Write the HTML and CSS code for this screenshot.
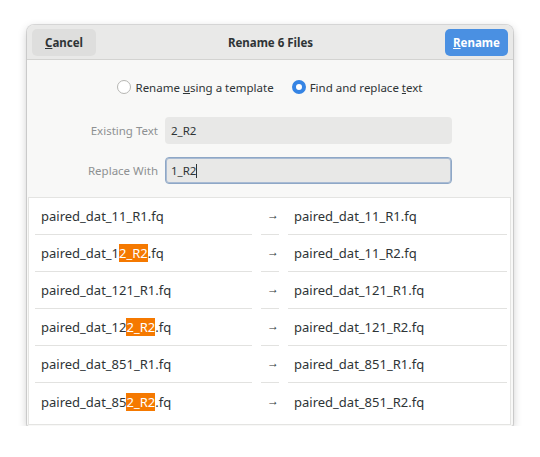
FILE: index.html
```
<!DOCTYPE html>
<html>
<head>
<meta charset="utf-8">
<link rel="stylesheet" href="styles.css">
</head>
<body>
<div class="window">
  <div class="header">
    <button class="btn cancel"><u>C</u>ancel</button>
    <div class="title">Rename 6 Files</div>
    <button class="btn rename"><u>R</u>ename</button>
  </div>
  <div class="content">
    <div class="modes">
      <label class="radio"><span class="dot"></span><span>Rename <u>u</u>sing a template</span></label>
      <label class="radio"><span class="dot on"></span><span>Find and replace <u>t</u>ext</span></label>
    </div>
    <div class="form">
      <span class="lbl">Existing Text</span>
      <div class="entry">2_R2</div>
      <span class="lbl">Replace With</span>
      <div class="entry focus">1_R2<span class="caret"></span></div>
    </div>
    <div class="list">
      <div class="cell">paired_dat_11_R1.fq</div><div class="cell arrow">→</div><div class="cell">paired_dat_11_R1.fq</div>
      <div class="cell">paired_dat_1<span class="hl">2_R2</span>.fq</div><div class="cell arrow">→</div><div class="cell">paired_dat_11_R2.fq</div>
      <div class="cell">paired_dat_121_R1.fq</div><div class="cell arrow">→</div><div class="cell">paired_dat_121_R1.fq</div>
      <div class="cell">paired_dat_12<span class="hl">2_R2</span>.fq</div><div class="cell arrow">→</div><div class="cell">paired_dat_121_R2.fq</div>
      <div class="cell">paired_dat_851_R1.fq</div><div class="cell arrow">→</div><div class="cell">paired_dat_851_R1.fq</div>
      <div class="cell last">paired_dat_85<span class="hl">2_R2</span>.fq</div><div class="cell arrow last">→</div><div class="cell last">paired_dat_851_R2.fq</div>
    </div>
  </div>
</div>
</body>
</html>
```
FILE: styles.css
```
html, body {
  margin: 0;
  padding: 0;
  background: #ffffff;
}
body {
  font-family: "Noto Sans", "Open Sans", sans-serif;
  font-size: 11.5px;
  color: #2e3436;
  padding: 25px 0 0 27px;
}
.window {
  width: 486px;
  height: 401px;
  border-radius: 7px 7px 2px 2px;
  box-shadow: 0 0 0 1px rgba(0,0,0,0.12), 0 3px 10px rgba(0,0,0,0.22);
  background: #f8f8f7;
  overflow: hidden;
  display: flex;
  flex-direction: column;
}
.header {
  height: 35px;
  box-sizing: border-box;
  background: #e9e9e8;
  border-bottom: 1px solid #d3d3d1;
  display: flex;
  align-items: center;
  padding: 0 5px;
}
.btn {
  font-family: inherit;
  font-size: 11.5px;
  font-weight: bold;
  height: 27px;
  border: none;
  border-radius: 5px;
  padding: 0;
}
.cancel {
  width: 64px;
  background: #dededd;
  color: #2e3436;
}
.rename {
  width: 63px;
  background: #4a90e2;
  color: #ffffff;
}
.title {
  flex: 1;
  text-align: center;
  font-weight: bold;
}
.content {
  flex: 1;
  display: flex;
  flex-direction: column;
}
.modes {
  display: flex;
  justify-content: center;
  gap: 18px;
  margin-top: 18px;
  height: 18px;
  align-items: center;
}
.radio {
  display: flex;
  align-items: center;
  gap: 4px;
}
.dot {
  width: 14px;
  height: 14px;
  box-sizing: border-box;
  border-radius: 50%;
  border: 1px solid #b6b6b3;
  background: #ffffff;
}
.dot.on {
  border: 4.5px solid #3584e4;
  background: #ffffff;
}
.form {
  display: grid;
  grid-template-columns: auto 287px;
  column-gap: 7px;
  row-gap: 13px;
  justify-content: center;
  align-items: center;
  margin-top: 21px;
}
.lbl {
  color: #8e9192;
  text-align: right;
}
.entry {
  height: 27px;
  box-sizing: border-box;
  background: #e8e8e7;
  border-radius: 4px;
  padding: 0 5px;
  display: flex;
  align-items: center;
  border: 1px solid transparent;
}
.entry.focus {
  border: 1px solid #8ea7c6;
  box-shadow: inset 0 0 0 1px #a9bbd3;
}
.caret {
  display: inline-block;
  width: 1px;
  height: 14px;
  background: #2e3436;
}
.list {
  margin: 13px 2px 1px 1px;
  flex: 1;
  background: #ffffff;
  border: 1px solid #e4e4e2;
  display: grid;
  grid-template-columns: 217px 18px 219px;
  grid-auto-rows: 37px;
  column-gap: 9px;
  padding: 0 4px 0 6px;
  align-content: start;
  font-size: 13px;
}
.cell {
  display: flex;
  align-items: center;
  padding-left: 6px;
  border-bottom: 1px solid #e2e2e0;
  white-space: nowrap;
}
.cell.last {
  border-bottom: none;
}
.arrow {
  padding-left: 6px;
  font-size: 12px;
  padding-bottom: 3px;
  box-sizing: border-box;
}
.hl {
  background: #f57900;
  color: #ffffff;
}
```
